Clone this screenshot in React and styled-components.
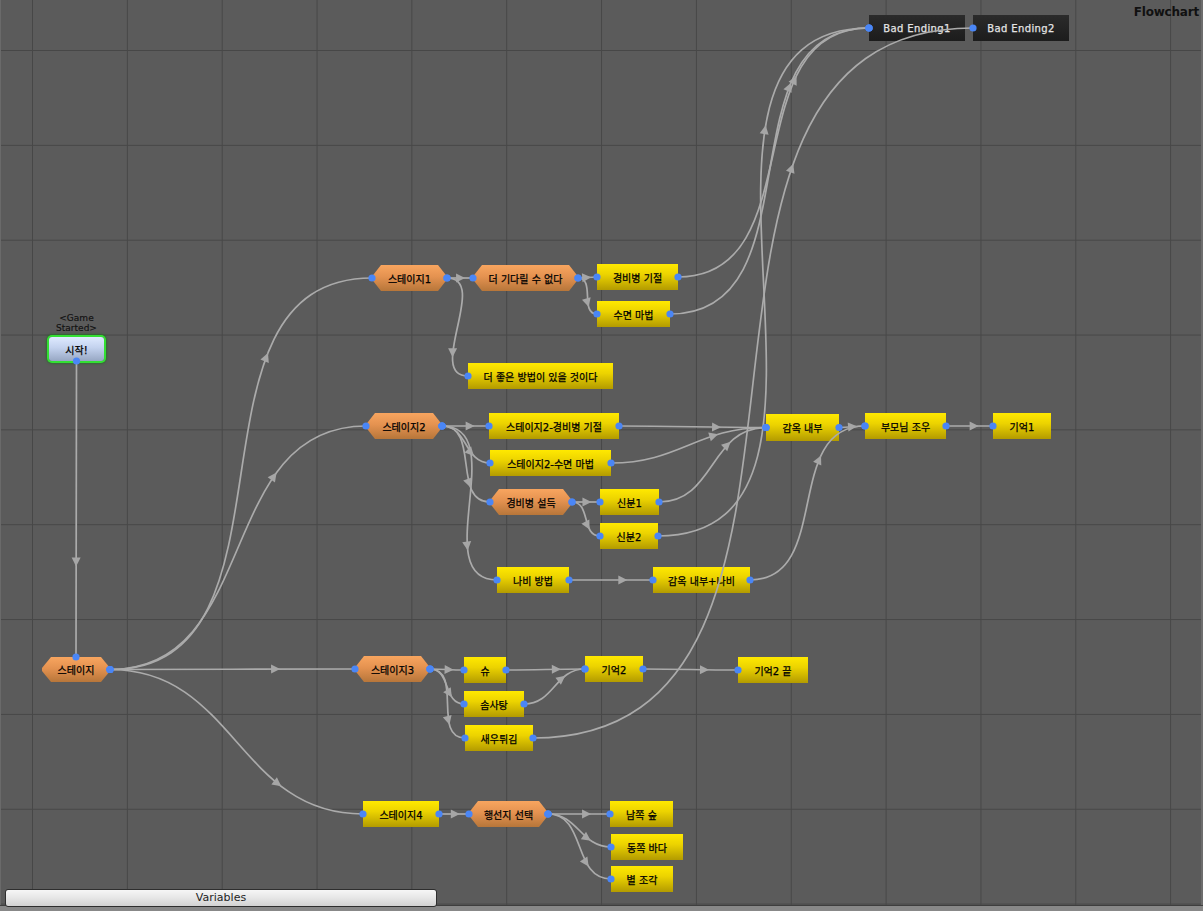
import React from 'react';
import styled, { createGlobalStyle, css } from 'styled-components';

const GlobalStyle = createGlobalStyle`
  html, body { margin: 0; padding: 0; background: #5b5b5b; }
  body { font-family: "DejaVu Sans", "Noto Sans CJK KR", sans-serif; }
`;

const Window = styled.div`
  width: 1203px;
  height: 911px;
  display: flex;
  flex-direction: column;
  overflow: hidden;
`;

const Canvas = styled.div`
  position: relative;
  flex: 1;
  background-color: #5b5b5b;
  background-image:
    linear-gradient(to right, #474747 1px, transparent 1px),
    linear-gradient(to bottom, #474747 1px, transparent 1px);
  background-size: 94.85px 94.85px;
  background-position: 32px 50px;
  box-shadow: inset 1px 0 0 #6a6a6a, inset -2px 0 0 #6c6c6c;
`;

const BottomEdge = styled.div`
  height: 5px;
  background: #888888;
  border-top: 1px solid #3e3e3e;
`;

const Title = styled.div`
  position: absolute;
  top: 5px;
  right: 4px;
  font-family: "DejaVu Sans", sans-serif;
  font-weight: bold;
  font-size: 12px;
  letter-spacing: -0.2px;
  color: #111;
`;

const kinds = {
  event: css`
    background: linear-gradient(to bottom, #ffe900 0%, #ecd300 40%, #b39b00 100%);
    color: #000;
  `,
  choice: css`
    background: linear-gradient(to bottom, #f8a55f 0%, #e49250 45%, #b7763a 100%);
    color: #000;
    clip-path: polygon(9px 0, calc(100% - 9px) 0, 100% 44%, 100% 56%, calc(100% - 9px) 100%, 9px 100%, 0 56%, 0 44%);
  `,
  dark: css`
    background: linear-gradient(to bottom, #2b2b2b, #1c1c1c);
    color: #e4e4e4;
    letter-spacing: 0.4px;
  `,
  start: css`
    background: linear-gradient(to bottom, #dfeaff 0%, #c3d2ee 45%, #97a7c3 100%);
    color: #000;
    border-radius: 3px;
    box-shadow: 0 0 0 2px #33e033, 0 0 2px 3px rgba(20, 120, 20, 0.55);
  `,
};

const Node = styled.div.attrs((p) => ({
  style: { left: p.$x, top: p.$y, width: p.$w, height: p.$h },
}))`
  position: absolute;
  box-sizing: border-box;
  display: flex;
  align-items: center;
  justify-content: center;
  font-size: 10px;
  white-space: nowrap;
  -webkit-text-stroke: 0.25px currentColor;
  ${(p) => kinds[p.$kind]}
`;

const EventLabel = styled.div`
  position: absolute;
  left: 50%;
  bottom: calc(100% + 4px);
  transform: translateX(-50%);
  width: 50px;
  text-align: center;
  font-family: "DejaVu Sans", sans-serif;
  font-size: 9px;
  line-height: 9.5px;
  color: #111;
  -webkit-text-stroke: 0.15px #111;
`;

const StartGroup = styled.div.attrs((p) => ({
  style: { left: p.$x, top: p.$y, width: p.$w, height: p.$h },
}))`
  position: absolute;
`;

const Wires = styled.svg`
  position: absolute;
  left: 0;
  top: 0;
  pointer-events: none;
  overflow: visible;
`;

const VariablesButton = styled.button`
  position: absolute;
  left: 5px;
  top: 889px;
  width: 432px;
  height: 18px;
  box-sizing: border-box;
  border: 1px solid #2e2e2e;
  border-radius: 3px;
  background: linear-gradient(to bottom, #f6f6f6 0%, #e6e6e6 50%, #d2d2d2 100%);
  font-family: "DejaVu Sans", sans-serif;
  font-size: 11px;
  color: #1e1e1e;
  padding: 0;
  line-height: 16px;
  z-index: 3;
`;

const nodes = {
  start: { x: 49, y: 337, w: 55, h: 24, kind: 'start', label: '시작!' },
  stage0: { x: 42, y: 657, w: 68, h: 25, kind: 'choice', label: '스테이지' },
  stage1: { x: 372, y: 265, w: 75, h: 26, kind: 'choice', label: '스테이지1' },
  wait1: { x: 473, y: 265, w: 105, h: 26, kind: 'choice', label: '더 기다릴 수 없다' },
  guard: { x: 597, y: 264, w: 81, h: 26, kind: 'event', label: '경비병 기절' },
  sleep: { x: 597, y: 301, w: 73, h: 26, kind: 'event', label: '수면 마법' },
  better: { x: 468, y: 363, w: 145, h: 26, kind: 'event', label: '더 좋은 방법이 있을 것이다' },
  stage2: { x: 366, y: 413, w: 76, h: 26, kind: 'choice', label: '스테이지2' },
  s2guard: { x: 489, y: 413, w: 130, h: 26, kind: 'event', label: '스테이지2-경비병 기절' },
  s2sleep: { x: 490, y: 450, w: 121, h: 26, kind: 'event', label: '스테이지2-수면 마법' },
  persuade: { x: 490, y: 489, w: 82, h: 26, kind: 'choice', label: '경비병 설득' },
  id1: { x: 600, y: 489, w: 59, h: 26, kind: 'event', label: '신분1' },
  id2: { x: 600, y: 523, w: 58, h: 26, kind: 'event', label: '신분2' },
  butterfly: { x: 497, y: 567, w: 72, h: 26, kind: 'event', label: '나비 방법' },
  prisonB: { x: 653, y: 567, w: 97, h: 26, kind: 'event', label: '감옥 내부+나비' },
  prison: { x: 766, y: 414, w: 73, h: 27, kind: 'event', label: '감옥 내부' },
  parents: { x: 865, y: 413, w: 81, h: 26, kind: 'event', label: '부모님 조우' },
  mem1: { x: 993, y: 413, w: 58, h: 26, kind: 'event', label: '기억1' },
  be1: { x: 869, y: 15, w: 96, h: 26, kind: 'dark', label: 'Bad Ending1' },
  be2: { x: 973, y: 15, w: 96, h: 26, kind: 'dark', label: 'Bad Ending2' },
  stage3: { x: 355, y: 656, w: 75, h: 26, kind: 'choice', label: '스테이지3' },
  shoe: { x: 464, y: 657, w: 42, h: 26, kind: 'event', label: '슈' },
  candy: { x: 464, y: 691, w: 60, h: 26, kind: 'event', label: '솜사탕' },
  shrimp: { x: 465, y: 725, w: 68, h: 26, kind: 'event', label: '새우튀김' },
  mem2: { x: 585, y: 656, w: 58, h: 26, kind: 'event', label: '기억2' },
  mem2end: { x: 738, y: 657, w: 70, h: 26, kind: 'event', label: '기억2 끝' },
  stage4: { x: 363, y: 801, w: 76, h: 26, kind: 'event', label: '스테이지4' },
  dest: { x: 469, y: 801, w: 79, h: 26, kind: 'choice', label: '행선지 선택' },
  south: { x: 610, y: 801, w: 63, h: 26, kind: 'event', label: '남쪽 숲' },
  east: { x: 611, y: 834, w: 72, h: 26, kind: 'event', label: '동쪽 바다' },
  star: { x: 611, y: 866, w: 62, h: 26, kind: 'event', label: '별 조각' },
};

const links = [
  ['start', 'stage0', 'bottom', 'top'],
  ['stage0', 'stage1'],
  ['stage0', 'stage2'],
  ['stage0', 'stage3'],
  ['stage0', 'stage4'],
  ['stage1', 'wait1'],
  ['stage1', 'better'],
  ['wait1', 'guard'],
  ['wait1', 'sleep'],
  ['guard', 'be1'],
  ['sleep', 'be1'],
  ['stage2', 's2guard'],
  ['stage2', 's2sleep'],
  ['stage2', 'persuade'],
  ['stage2', 'butterfly'],
  ['s2guard', 'prison'],
  ['s2sleep', 'prison'],
  ['persuade', 'id1'],
  ['persuade', 'id2'],
  ['id1', 'prison'],
  ['id2', 'be1'],
  ['butterfly', 'prisonB'],
  ['prisonB', 'parents'],
  ['prison', 'parents'],
  ['parents', 'mem1'],
  ['stage3', 'shoe'],
  ['stage3', 'candy'],
  ['stage3', 'shrimp'],
  ['shoe', 'mem2'],
  ['candy', 'mem2'],
  ['mem2', 'mem2end'],
  ['shrimp', 'be2'],
  ['stage4', 'dest'],
  ['dest', 'south'],
  ['dest', 'east'],
  ['dest', 'star'],
];

const DIRS = { left: [-1, 0], right: [1, 0], top: [0, -1], bottom: [0, 1] };

function port(n, side) {
  switch (side) {
    case 'left':
      return [n.x, n.y + n.h / 2];
    case 'right':
      return [n.x + n.w, n.y + n.h / 2];
    case 'top':
      return [n.x + n.w / 2, n.y];
    default:
      return [n.x + n.w / 2, n.y + n.h];
  }
}

function bez(p0, c1, c2, p3, t) {
  const u = 1 - t;
  const a = u * u * u, b = 3 * u * u * t, c = 3 * u * t * t, d = t * t * t;
  return [
    a * p0[0] + b * c1[0] + c * c2[0] + d * p3[0],
    a * p0[1] + b * c1[1] + c * c2[1] + d * p3[1],
  ];
}

function bezD(p0, c1, c2, p3, t) {
  const u = 1 - t;
  const a = 3 * u * u, b = 6 * u * t, c = 3 * t * t;
  return [
    a * (c1[0] - p0[0]) + b * (c2[0] - c1[0]) + c * (p3[0] - c2[0]),
    a * (c1[1] - p0[1]) + b * (c2[1] - c1[1]) + c * (p3[1] - c2[1]),
  ];
}

function buildWire([from, to, fs = 'right', ts = 'left']) {
  const A = nodes[from];
  const B = nodes[to];
  const p0 = port(A, fs);
  const p3 = port(B, ts);
  const dist = Math.hypot(p3[0] - p0[0], p3[1] - p0[1]);
  const k = dist * 0.43;
  const c1 = [p0[0] + DIRS[fs][0] * k, p0[1] + DIRS[fs][1] * k];
  const c2 = [p3[0] + DIRS[ts][0] * k, p3[1] + DIRS[ts][1] * k];
  const tip = bez(p0, c1, c2, p3, 0.72);
  const dv = bezD(p0, c1, c2, p3, 0.72);
  const len = Math.hypot(dv[0], dv[1]) || 1;
  const ux = dv[0] / len, uy = dv[1] / len;
  const nx = -uy, ny = ux;
  const bx = tip[0] - ux * 9, by = tip[1] - uy * 9;
  const arrow = [
    [tip[0], tip[1]],
    [bx + nx * 4.5, by + ny * 4.5],
    [bx - nx * 4.5, by - ny * 4.5],
  ];
  return {
    d: `M${p0[0]},${p0[1]} C${c1[0]},${c1[1]} ${c2[0]},${c2[1]} ${p3[0]},${p3[1]}`,
    arrow: arrow.map((p) => p.join(',')).join(' '),
    ends: [p0, p3],
  };
}

const wires = links.map(buildWire);

function Diagram() {
  return (
    <Wires width="1203" height="905" viewBox="0 0 1203 905">
      {wires.map((w, i) => (
        <path key={`p${i}`} d={w.d} fill="none" stroke="#ababab" strokeWidth="1.7" />
      ))}
      {wires.map((w, i) => (
        <polygon key={`a${i}`} points={w.arrow} fill="#a6a6a6" />
      ))}
      {wires.map((w, i) =>
        w.ends.map((p, j) => (
          <circle key={`c${i}-${j}`} cx={p[0]} cy={p[1]} r="3.6" fill="#4a86f6" />
        ))
      )}
    </Wires>
  );
}

export default function App() {
  const { start, ...rest } = nodes;
  return (
    <>
      <GlobalStyle />
      <Window>
        <Canvas>
          <StartGroup $x={start.x} $y={start.y} $w={start.w} $h={start.h}>
            <EventLabel>&lt;Game Started&gt;</EventLabel>
            <Node $kind="start" $x={0} $y={0} $w={start.w} $h={start.h}>
              {start.label}
            </Node>
          </StartGroup>
          {Object.entries(rest).map(([id, n]) => (
            <Node key={id} $kind={n.kind} $x={n.x} $y={n.y} $w={n.w} $h={n.h}>
              {n.label}
            </Node>
          ))}
          <Diagram />
          <Title>Flowchart</Title>
          <VariablesButton type="button">Variables</VariablesButton>
        </Canvas>
        <BottomEdge />
      </Window>
    </>
  );
}
